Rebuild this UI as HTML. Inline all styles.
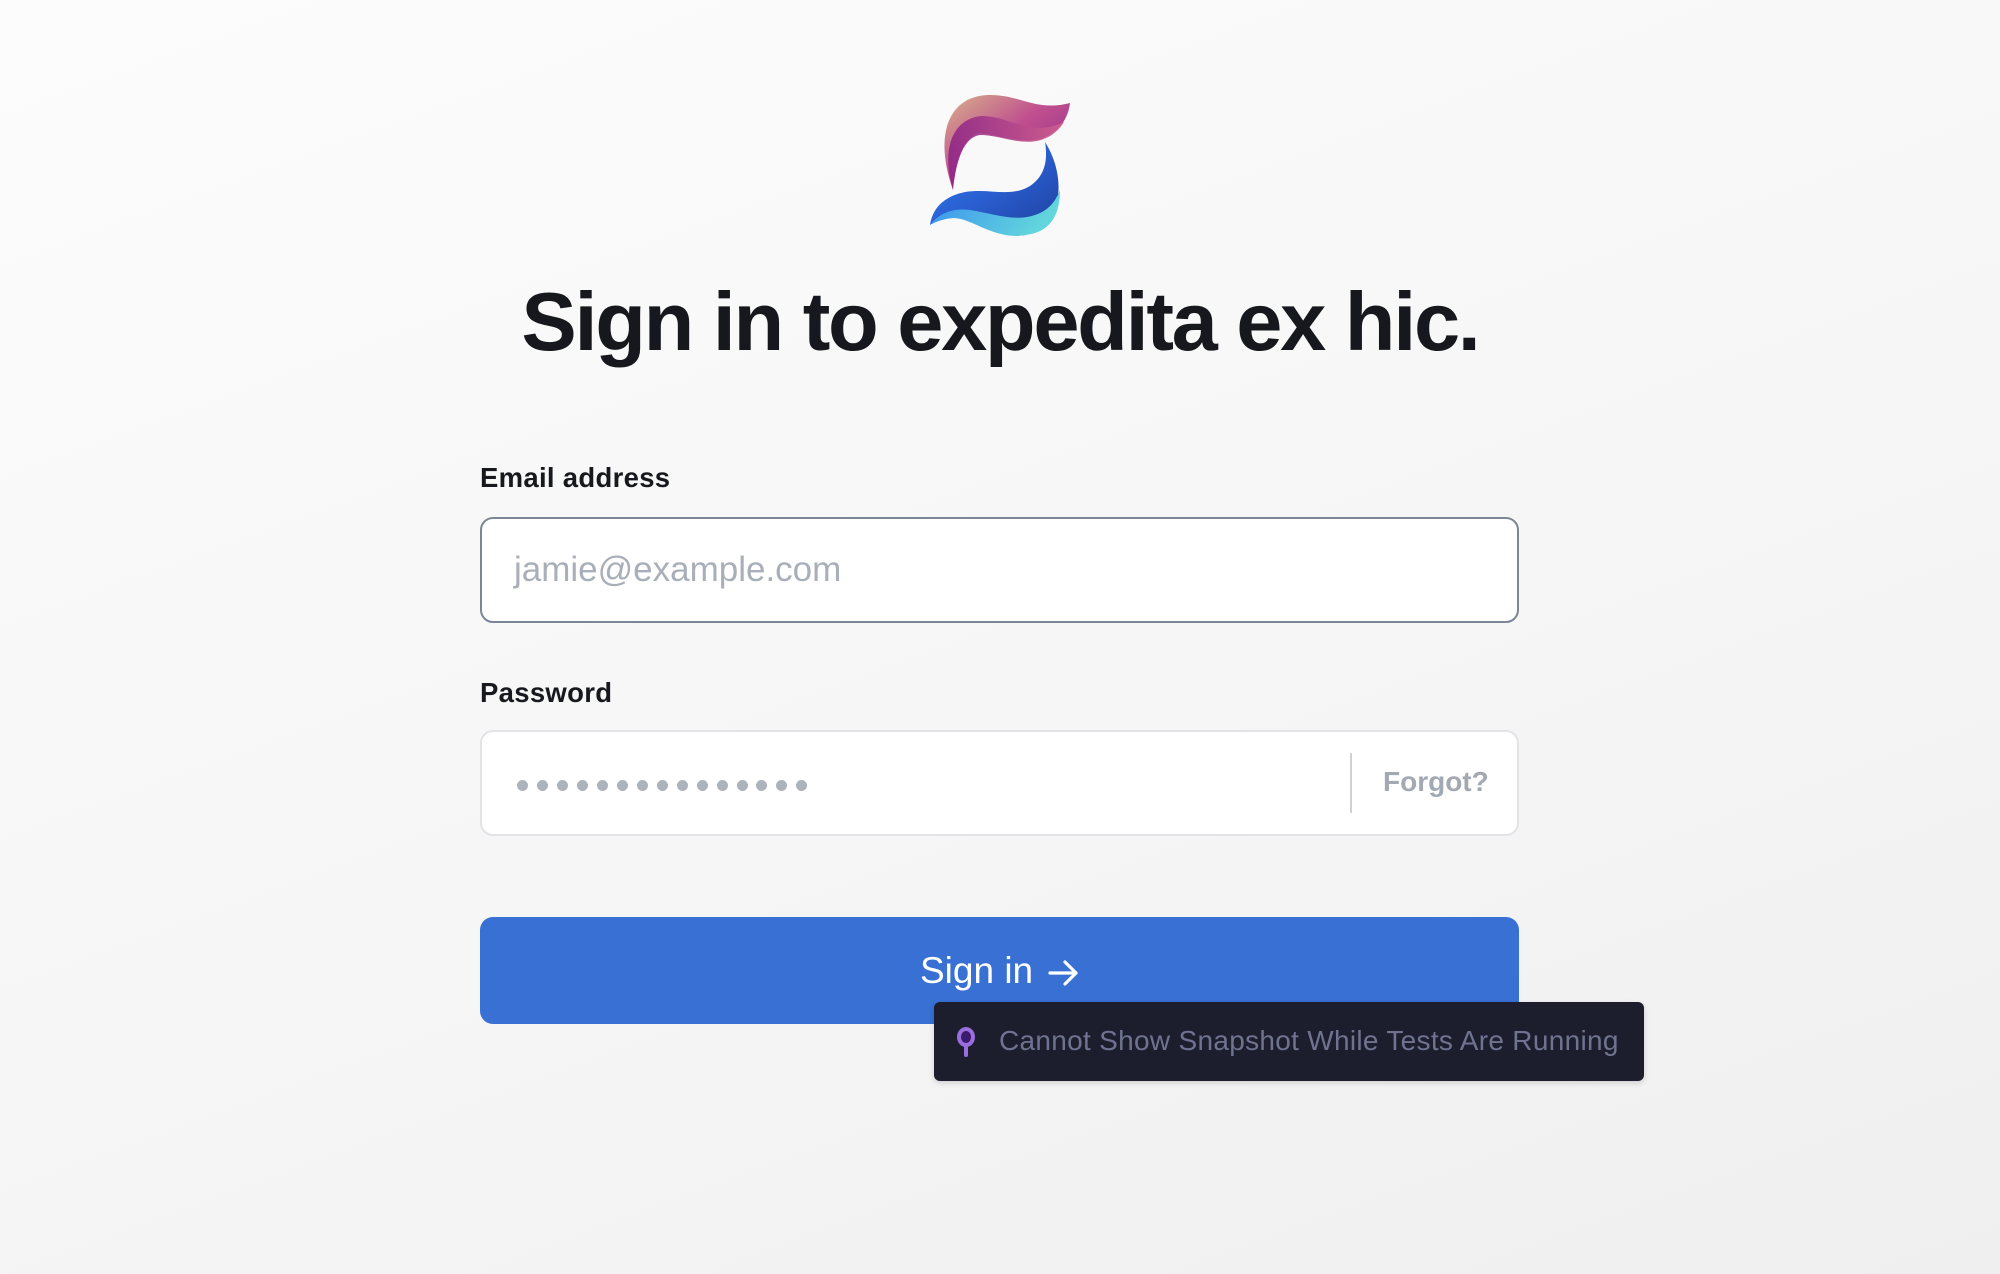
<!DOCTYPE html>
<html><head><meta charset="utf-8"><style>
html,body{margin:0;padding:0}
body{width:2000px;height:1274px;overflow:hidden;position:relative;background:linear-gradient(160deg,#fcfcfc 0%,#f6f6f6 55%,#efeff0 100%);font-family:"Liberation Sans",sans-serif}
.abs{position:absolute}
h1{position:absolute;left:0;width:2000px;top:272px;margin:0;text-align:center;font-size:83px;font-weight:700;color:#16181d;letter-spacing:-2.3px;line-height:100px}
.lbl{position:absolute;left:480px;font-size:27.5px;font-weight:700;color:#17191e;letter-spacing:0.3px}
.inp{position:absolute;left:480px;width:1039px;background:#fff;box-sizing:border-box;border-radius:13px}
.dot{position:absolute;top:780px;width:11px;height:11px;border-radius:50%;background:#adb3bd}
</style></head><body>
<svg class="abs" style="left:0;top:0" width="2000" height="300" viewBox="0 0 2000 300">
<defs>
<linearGradient id="g1" x1="0" y1="0" x2="1" y2="1"><stop offset="0" stop-color="#d9b48a"/><stop offset="0.45" stop-color="#c04f8f"/><stop offset="1" stop-color="#8a2a88"/></linearGradient>
<linearGradient id="g1b" x1="0" y1="0" x2="1" y2="0"><stop offset="0" stop-color="#8e2586"/><stop offset="1" stop-color="#d0608e"/></linearGradient>
<linearGradient id="g2" x1="0" y1="0" x2="1" y2="1"><stop offset="0" stop-color="#2f7ef0"/><stop offset="0.5" stop-color="#2a5ed0"/><stop offset="1" stop-color="#1d3f9a"/></linearGradient>
<linearGradient id="g2b" x1="0" y1="0" x2="1" y2="0.3"><stop offset="0" stop-color="#3a8ef0"/><stop offset="1" stop-color="#62d6dc"/></linearGradient>
</defs>
<path d="M953 190 C932 130 952 96 988 95 C1020 94 1035 112 1070 103 C1068 120 1058 132 1043 138 C1025 145 1000 135 980 133 C964 135 956 160 953 190 Z" fill="url(#g1)"/>
<path d="M953 190 C940 145 955 118 982 116 C1010 116 1030 138 1064 122 C1058 132 1050 137 1041 140 C1020 146 1000 135 980 135 C964 137 956 160 953 190 Z" fill="url(#g1b)" opacity="0.9"/>
<path d="M1045 142 C1068 178 1062 228 1025 235 C995 240 975 218 955 218 C945 218 935 222 930 225 C933 206 946 196 965 192 C990 188 1010 198 1030 186 C1045 176 1048 160 1045 142 Z" fill="url(#g2)"/>
<path d="M930 225 C940 212 955 208 970 210 C995 214 1015 222 1035 215 C1050 210 1056 200 1060 190 C1060 220 1046 233 1025 235 C995 240 975 220 955 218 C945 218 936 221 930 225 Z" fill="url(#g2b)"/>
</svg>
<h1>Sign in to expedita ex hic.</h1>
<div class="lbl" style="top:462px">Email address</div>
<div class="inp" style="top:517px;height:106px;border:2px solid #7b8797"></div>
<div class="abs" style="left:514px;top:549px;font-size:35px;color:#a9afb9;line-height:42px">jamie@example.com</div>
<div class="lbl" style="top:677px">Password</div>
<div class="inp" style="top:730px;height:106px;border:2px solid #e2e3e6"></div>
<div class="dot" style="left:517px"></div><div class="dot" style="left:537px"></div><div class="dot" style="left:557px"></div><div class="dot" style="left:577px"></div><div class="dot" style="left:597px"></div><div class="dot" style="left:617px"></div><div class="dot" style="left:637px"></div><div class="dot" style="left:657px"></div><div class="dot" style="left:677px"></div><div class="dot" style="left:697px"></div><div class="dot" style="left:717px"></div><div class="dot" style="left:737px"></div><div class="dot" style="left:756px"></div><div class="dot" style="left:776px"></div><div class="dot" style="left:796px"></div>
<div class="abs" style="left:1350px;top:753px;width:2px;height:60px;background:#cfd1d5"></div>
<div class="abs" style="left:1383px;top:764px;font-size:28px;font-weight:700;color:#a3a9b3;line-height:36px">Forgot?</div>
<div class="abs" style="left:480px;top:917px;width:1039px;height:107px;background:#3870d4;border-radius:13px"></div>
<div class="abs" style="left:920px;top:948px;font-size:37px;color:#fff;line-height:46px">Sign in</div>
<svg class="abs" style="left:1048px;top:959px" width="32" height="28" viewBox="0 0 32 28"><path d="M2 14 H28 M17 3 L28 14 L17 25" fill="none" stroke="#fff" stroke-width="3.2" stroke-linecap="round" stroke-linejoin="round"/></svg>
<div class="abs" style="left:934px;top:1002px;width:710px;height:79px;background:#1c1e2e;border-radius:6px;box-shadow:0 2px 6px rgba(0,0,0,.15)"></div>
<svg class="abs" style="left:955px;top:1025px" width="24" height="36" viewBox="0 0 24 36"><ellipse cx="11" cy="12" rx="7" ry="8" fill="#3c1a6e" stroke="#9b6ee0" stroke-width="4"/><rect x="9" y="19" width="4" height="13" rx="2" fill="#9b6ee0"/></svg>
<div class="abs" style="left:999px;top:1023px;font-size:28px;color:#6f738f;line-height:36px;letter-spacing:0.3px">Cannot Show Snapshot While Tests Are Running</div>
</body></html>
